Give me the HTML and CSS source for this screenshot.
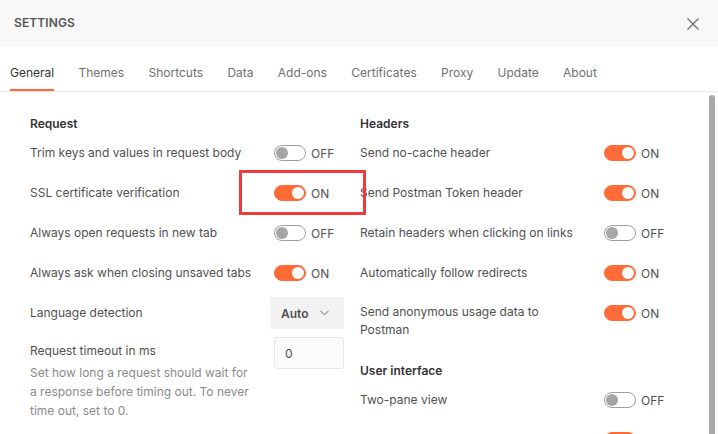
FILE: index.html
```html
<!DOCTYPE html>
<html>
<head>
<meta charset="utf-8">
<link rel="stylesheet" href="styles.css">
</head>
<body>
<div class="dialog">
  <header class="top">
    <span class="title">SETTINGS</span>
    <span class="close">
      <svg width="12" height="12" viewBox="0 0 12 12"><path d="M0.5 0.5L11.5 11.5M11.5 0.5L0.5 11.5" stroke="#6b6b6b" stroke-width="1.2" fill="none"/></svg>
    </span>
  </header>
  <nav class="tabs">
    <span class="tab active">General</span>
    <span class="tab">Themes</span>
    <span class="tab">Shortcuts</span>
    <span class="tab">Data</span>
    <span class="tab">Add-ons</span>
    <span class="tab">Certificates</span>
    <span class="tab">Proxy</span>
    <span class="tab">Update</span>
    <span class="tab">About</span>
  </nav>
  <div class="body">
    <main class="content">
      <section class="col">
        <h3 class="heading">Request</h3>
        <div class="row"><div class="label">Trim keys and values in request body</div><div class="ctrl"><span class="toggle"></span><span class="state">OFF</span></div></div>
        <div class="row"><div class="label">SSL certificate verification</div><div class="ctrl"><span class="toggle on"></span><span class="state">ON</span></div></div>
        <div class="row"><div class="label">Always open requests in new tab</div><div class="ctrl"><span class="toggle"></span><span class="state">OFF</span></div></div>
        <div class="row"><div class="label">Always ask when closing unsaved tabs</div><div class="ctrl"><span class="toggle on"></span><span class="state">ON</span></div></div>
        <div class="row"><div class="label">Language detection</div><div class="ctrl"><span class="select">Auto<svg width="9" height="6" viewBox="0 0 9 6"><path d="M0.5 0.8L4.5 4.8L8.5 0.8" stroke="#6b6b6b" stroke-width="1" fill="none"/></svg></span></div></div>
        <div class="row">
          <div class="label">
            <div class="label-title">Request timeout in ms</div>
            <div class="desc">Set how long a request should wait for a response before timing out. To never time out, set to 0.</div>
          </div>
          <div class="ctrl top-ctrl"><span class="input">0</span></div>
        </div>
      </section>
      <section class="col">
        <h3 class="heading">Headers</h3>
        <div class="row"><div class="label">Send no-cache header</div><div class="ctrl"><span class="toggle on"></span><span class="state">ON</span></div></div>
        <div class="row"><div class="label">Send Postman Token header</div><div class="ctrl"><span class="toggle on"></span><span class="state">ON</span></div></div>
        <div class="row"><div class="label">Retain headers when clicking on links</div><div class="ctrl"><span class="toggle"></span><span class="state">OFF</span></div></div>
        <div class="row"><div class="label">Automatically follow redirects</div><div class="ctrl"><span class="toggle on"></span><span class="state">ON</span></div></div>
        <div class="row"><div class="label two">Send anonymous usage data to Postman</div><div class="ctrl"><span class="toggle on"></span><span class="state">ON</span></div></div>
        <h3 class="heading sub">User interface</h3>
        <div class="row"><div class="label">Two-pane view</div><div class="ctrl"><span class="toggle"></span><span class="state">OFF</span></div></div>
        <div class="row"><div class="label"></div><div class="ctrl"><span class="toggle on"></span></div></div>
      </section>
    </main>
    <div class="track"><div class="thumb"></div></div>
  </div>
  <div class="highlight"></div>
</div>
</body>
</html>
```

FILE: styles.css
```css
* { box-sizing: border-box; }
html, body { margin: 0; padding: 0; }
body {
  width: 718px;
  height: 434px;
  overflow: hidden;
  background: #ffffff;
  font-family: Inter, "Noto Sans", "Liberation Sans", sans-serif;
  font-size: 12px;
  color: #505050;
}
.dialog { position: relative; width: 718px; height: 434px; }

.top {
  height: 47px;
  background: #f8f8f8;
  display: flex;
  align-items: center;
  justify-content: space-between;
  padding: 0 19px 0 14px;
}
.title {
  font-weight: 600;
  font-size: 12px;
  color: #555555;
  letter-spacing: 0.1px;
  margin-top: -2px;
}
.close { display: flex; margin-top: 1px; }

.tabs {
  display: flex;
  gap: 24.3px;
  padding-left: 10px;
  border-bottom: 1px solid #e8e8e8;
  height: 45px;
}
.tab {
  height: 44px;
  padding-top: 16px;
  line-height: 20px;
  font-size: 12px;
  color: #707070;
  border-bottom: 2px solid transparent;
}
.tab.active { color: #333333; border-bottom-color: #ff6c37; }

.body { display: flex; height: 342px; overflow: hidden; }
.content {
  flex: 1;
  display: flex;
  gap: 16px;
  padding: 22px 0 0 30px;
  align-items: flex-start;
  overflow: hidden;
}
.col { width: 314px; flex-shrink: 0; }
.heading {
  margin: 0;
  font-size: 12px;
  font-weight: 600;
  line-height: 19px;
  color: #333333;
}
.heading.sub { margin-top: 12px; }
.row { display: flex; align-items: flex-start; padding: 10px 0; }
.label { width: 244px; flex-shrink: 0; line-height: 20px; }
.label.two { line-height: 18px; width: 200px; margin-right: 44px; }
.ctrl { display: flex; align-items: center; gap: 5px; height: 20px; }
.state { color: #505050; }

.toggle {
  width: 32px;
  height: 16px;
  border-radius: 8px;
  border: 1px solid #9e9e9e;
  background: #ffffff;
  position: relative;
  flex-shrink: 0;
}
.toggle::after {
  content: "";
  position: absolute;
  top: 1px;
  left: 1px;
  width: 12px;
  height: 12px;
  border-radius: 50%;
  background: #a6a6a6;
}
.toggle.on { background: #ff6c37; border-color: #ff6c37; }
.toggle.on::after { left: auto; right: 1px; background: #ffffff; }

.select {
  display: flex;
  align-items: center;
  justify-content: space-between;
  width: 74px;
  height: 32px;
  margin: -6px 0 -6px -4px;
  padding: 0 15px 0 11px;
  background: #f2f2f2;
  font-weight: 600;
  color: #505050;
}
.label-title { line-height: 16px; }
.desc {
  margin-top: 4px;
  line-height: 19px;
  color: #8a8a8a;
  width: 226px;
}
.top-ctrl { align-items: flex-start; }
.input {
  display: flex;
  align-items: center;
  width: 70px;
  height: 32px;
  margin-top: -6px;
  padding-left: 10px;
  border: 1px solid #e6e6e6;
  border-radius: 3px;
  background: #fbfbfb;
  color: #505050;
}

.track { width: 12px; flex-shrink: 0; padding: 3px 3px 0 3px; }
.thumb { height: 100%; background: #a9a9a9; border-radius: 3px 3px 0 0; }

.highlight {
  position: absolute;
  left: 239px;
  top: 170px;
  width: 127px;
  height: 45px;
  border: 3px solid #ef3a3c;
}
```
